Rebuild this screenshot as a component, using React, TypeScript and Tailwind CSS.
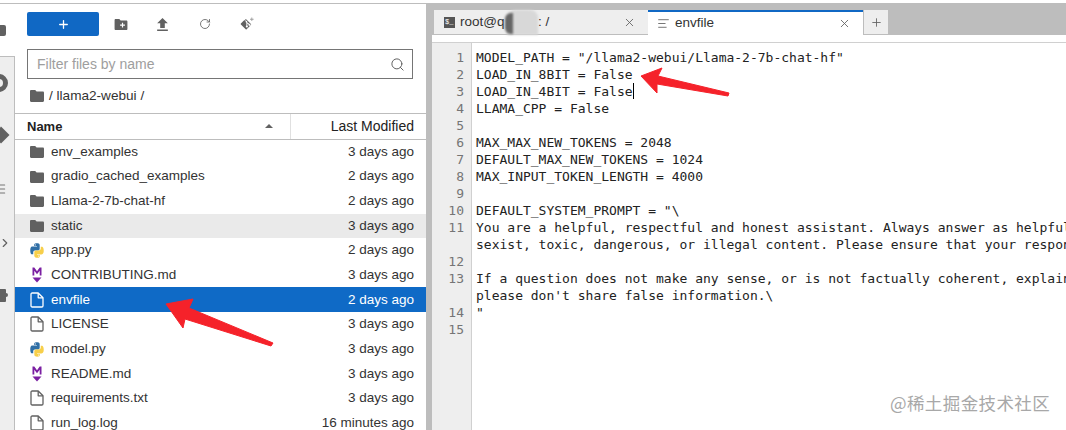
import { Plus, RotateCw, Search, X, ChevronRight, AlignLeft, Menu } from 'lucide-react';

const files = [
  { name: 'env_examples', time: '3 days ago', kind: 'folder' },
  { name: 'gradio_cached_examples', time: '2 days ago', kind: 'folder' },
  { name: 'Llama-2-7b-chat-hf', time: '2 days ago', kind: 'folder' },
  { name: 'static', time: '3 days ago', kind: 'folder', hover: true },
  { name: 'app.py', time: '2 days ago', kind: 'py' },
  { name: 'CONTRIBUTING.md', time: '3 days ago', kind: 'md' },
  { name: 'envfile', time: '2 days ago', kind: 'file', selected: true },
  { name: 'LICENSE', time: '3 days ago', kind: 'file' },
  { name: 'model.py', time: '3 days ago', kind: 'py' },
  { name: 'README.md', time: '3 days ago', kind: 'md' },
  { name: 'requirements.txt', time: '3 days ago', kind: 'file' },
  { name: 'run_log.log', time: '16 minutes ago', kind: 'file' },
];

const lines: [string, string][] = [
  ['1', 'MODEL_PATH = "/llama2-webui/Llama-2-7b-chat-hf"'],
  ['2', 'LOAD_IN_8BIT = False'],
  ['3', 'LOAD_IN_4BIT = False'],
  ['4', 'LLAMA_CPP = False'],
  ['5', ''],
  ['6', 'MAX_MAX_NEW_TOKENS = 2048'],
  ['7', 'DEFAULT_MAX_NEW_TOKENS = 1024'],
  ['8', 'MAX_INPUT_TOKEN_LENGTH = 4000'],
  ['9', ''],
  ['10', 'DEFAULT_SYSTEM_PROMPT = "\\'],
  ['11', 'You are a helpful, respectful and honest assistant. Always answer as helpful'],
  ['', 'sexist, toxic, dangerous, or illegal content. Please ensure that your respon'],
  ['12', ''],
  ['13', 'If a question does not make any sense, or is not factually coherent, explain'],
  ['', "please don't share false information.\\"],
  ['14', '"'],
  ['15', ''],
];

function FolderIcon({ className = 'w-[14px] h-[12px]' }: { className?: string }) {
  return (
    <svg viewBox="0 0 14 12" className={className} fill="#616161">
      <path d="M1.200 0h4l1.400 1.600h6.200c.7 0 1.200.5 1.200 1.200v8c0 .7-.5 1.200-1.200 1.200H1.200C.5 12 0 11.500 0 10.800V1.200C0 .5.5 0 1.200 0z" />
    </svg>
  );
}

function FileIcon({ color }: { color: string }) {
  return (
    <svg viewBox="0 0 14 16" className="w-[14px] h-[16px]" fill="none" stroke={color} strokeWidth="1.300" strokeLinejoin="round">
      <path d="M2.200 1h6l4.800 4.800v7.900c0 .7-.5 1.300-1.200 1.300H2.200c-.7 0-1.200-.6-1.200-1.300V2.300C1 1.600 1.500 1 2.200 1z" />
      <path d="M8.200 1v4.800H13" />
    </svg>
  );
}

function PyIcon() {
  return (
    <svg viewBox="0 0 16 16" className="w-[15px] h-[15px] scale-110">
      <path fill="#2f6ea5" d="M7.900.5C4.800.5 5 1.900 5 1.900v1.500h3v.5H3.200S1 3.600 1 7.900c0 4.200 1.900 4.100 1.900 4.100h1.200v-2s-.1-1.900 1.900-1.900h3s1.800 0 1.800-1.800V2.500S11.100.5 7.900.5zM6.200 1.600a.6.600 0 1 1 0 1.200.6.600 0 0 1 0-1.200z" />
      <path fill="#f7cf4a" d="M8.100 15.500c3.100 0 2.900-1.400 2.900-1.400v-1.500H8v-.5h4.800s2.200.3 2.200-4c0-4.200-1.900-4.100-1.900-4.100h-1.200v2s.1 1.900-1.900 1.900H7s-1.800 0-1.800 1.800v3.300s-.3 2.500 2.900 2.500zm1.700-1.100a.6.600 0 1 1 0-1.200.6.600 0 0 1 0 1.200z" />
    </svg>
  );
}

function MdIcon() {
  return (
    <svg viewBox="0 0 10 16" className="w-[10px] h-[16px]" fill="#7B1FA2">
      <path d="M0.500 0.500h1.800L5 4.200 7.700 0.500h1.800v8H7.700V3.800L5 7.200 2.300 3.800v4.700H.5z" />
      <path d="M0.500 10.500h9L5 15.500z" />
    </svg>
  );
}

function RowIcon({ kind, selected }: { kind: string; selected?: boolean }) {
  if (kind === 'folder') return <FolderIcon />;
  if (kind === 'py') return <PyIcon />;
  if (kind === 'md') return <MdIcon />;
  return <FileIcon color={selected ? '#ffffff' : '#616161'} />;
}

function GitIcon() {
  return (
    <svg viewBox="0 0 16 16" className="w-[14px] h-[14px]" fill="#616161">
      <path d="M7 2.500l5.500 5.500a.8.800 0 0 1 0 1.100L7.600 14a.8.800 0 0 1-1.100 0L1 8.500a.8.800 0 0 1 0-1.100L5 3.400l1.600 1.600a1.200 1.200 0 0 0 .7 1.600v3a1.200 1.200 0 1 0 1.100 0V7.300l1.300 1.300a1.200 1.200 0 1 0 .8-.8L8.200 5.900A1.200 1.200 0 0 0 6.700 4.500L5.600 2.900z" />
      <path d="M13 0.500h1v1.500h1.500v1H14v1.500h-1V3h-1.500V2H13z" fill="#9e9e9e" />
    </svg>
  );
}

function UploadIcon() {
  return (
    <svg viewBox="5 3 14 17" className="w-[11px] h-[13px]" fill="#616161">
      <path d="M9 16h6v-6h4l-7-7-7 7h4zm-4 2h14v2H5z" />
    </svg>
  );
}

function FolderPlusIcon() {
  return (
    <svg viewBox="0 0 14 12" className="w-[14px] h-[11px]">
      <path fill="#616161" d="M1.200 0h4l1.400 1.600h6.200c.7 0 1.200.5 1.200 1.200v8c0 .7-.5 1.200-1.200 1.200H1.200C.5 12 0 11.500 0 10.800V1.200C0 .5.5 0 1.200 0z" />
      <path fill="#fff" d="M8 4h1.300v2h2v1.300h-2v2H8v-2H6V6h2z" />
    </svg>
  );
}

function Sidebar() {
  return (
    <div className="w-[15px] shrink-0 flex flex-col overflow-hidden">
      <div className="h-[52px] shrink-0 relative">
        <div className="absolute left-[-8px] top-[21px] w-[14px] h-[11px] rounded-[2px] bg-[#616161]" />
      </div>
      <div className="flex-1 bg-[#eeeeee] border-t border-r border-[#bdbdbd] relative">
        <div className="absolute left-[-10px] top-[17px] w-[18px] h-[18px] rounded-full border-[5px] border-[#616161]" />
        <div className="absolute left-[-5px] top-[72px] w-[12px] h-[12px] rotate-45 bg-[#616161]" />
        <Menu size={14} strokeWidth={1.8} className="absolute left-[-7px] top-[125px] text-[#757575]" />
        <ChevronRight size={14} strokeWidth={2} className="absolute left-[-2px] top-[179px] text-[#616161]" />
        <div className="absolute left-[-5px] top-[232px] w-[11px] h-[13px] rounded-[1px] bg-[#616161]" />
        <div className="absolute left-[4px] top-[236px] w-[4px] h-[4px] rounded-full bg-[#616161]" />
      </div>
    </div>
  );
}

function FileBrowser() {
  return (
    <div className="w-[411px] shrink-0 flex flex-col bg-white overflow-hidden">
      <div className="shrink-0 flex items-center h-[24px] mt-[8px] pl-[12px] text-[#616161]">
        <button className="w-[72px] h-[24px] bg-[#1068c4] rounded-[2px] flex items-center justify-center text-white">
          <Plus size={13} strokeWidth={2.4} />
        </button>
        <div className="ml-[15px]"><FolderPlusIcon /></div>
        <div className="ml-[29px]"><UploadIcon /></div>
        <RotateCw size={12} strokeWidth={1.7} className="ml-[31px]" />
        <div className="ml-[29px]"><GitIcon /></div>
      </div>
      <div className="shrink-0 mt-[13px] ml-[12px] w-[386px] h-[30px] border border-[#757575] flex items-center justify-between pl-[9px] pr-[7px]">
        <span className="text-[14px] text-[#9e9e9e]">Filter files by name</span>
        <Search size={15} strokeWidth={1.6} className="text-[#616161]" />
      </div>
      <div className="shrink-0 h-[34px] pl-[15px] flex items-center gap-[5px] text-[13.600px] text-[#333]">
        <FolderIcon />
        <span>/ llama2-webui /</span>
      </div>
      <div className="shrink-0 h-[26.600px] flex items-center border-t border-b border-[#bdbdbd] text-[#222]">
        <div className="w-[275px] h-full pl-[12px] pr-[17px] flex items-center justify-between font-semibold text-[13px]">
          <span>Name</span>
          <span className="w-0 h-0 border-x-[4px] border-x-transparent border-b-[4px] border-b-[#616161]" />
        </div>
        <div className="flex-1 h-full border-l border-[#e0e0e0] pr-[12px] flex items-center justify-end text-[14px]">Last Modified</div>
      </div>
      <div className="flex flex-col">
        {files.map((f) => (
          <div
            key={f.name}
            className={
              'h-[24.650px] shrink-0 flex items-center pl-[15px] pr-[12px] text-[13.500px] ' +
              (f.selected ? 'bg-[#0f6ac6] text-white' : f.hover ? 'bg-[#eaeaea] text-[#333]' : 'text-[#333]')
            }
          >
            <div className="w-[14px] flex justify-center shrink-0"><RowIcon kind={f.kind} selected={f.selected} /></div>
            <span className="ml-[7px] flex-1 truncate">{f.name}</span>
            <span>{f.time}</span>
          </div>
        ))}
      </div>
    </div>
  );
}

function Editor() {
  return (
    <div className="flex-1 min-w-0 flex flex-col">
      <div className="h-[6px] shrink-0" />
      <div className="h-[25px] shrink-0 flex items-stretch text-[13.500px] text-[#333]">
        <div className="w-[214px] ml-[2px] bg-[#eeeeee] border-b border-[#bdbdbd] flex items-center pt-[1px] pl-[10px] pr-[12px] relative">
          <span className="w-[11px] h-[11px] bg-[#555] text-white text-[7px] leading-[11px] font-mono pl-[1px]">$_</span>
          <span className="ml-[5px]">root@q</span>
          <span className="absolute left-[73px] top-[0px] w-[31px] h-[25px] rounded-t-[8px] bg-[#d8d8d8] blur-[1px]" />
          <span className="absolute left-[71px] top-[3px] w-[8px] h-[21px] rounded-l-[6px] bg-[#666] blur-[1px]" />
          <span className="absolute left-[104px]">: /</span>
          <X size={13} strokeWidth={1.6} className="ml-auto text-[#616161]" />
        </div>
        <div className="w-[215px] bg-white border-t-2 border-[#1068c4] flex items-center pl-[9px] pr-[12px]">
          <AlignLeft size={13} strokeWidth={1.6} className="text-[#616161]" />
          <span className="ml-[5px]">envfile</span>
          <X size={13} strokeWidth={1.6} className="ml-auto text-[#616161]" />
        </div>
        <div className="w-[25px] bg-[#eeeeee] border-l border-b border-[#bdbdbd] flex items-center justify-center">
          <Plus size={13} strokeWidth={1.6} className="text-[#616161]" />
        </div>
        <div className="flex-1 border-b border-[#bdbdbd]" />
      </div>
      <div className="h-[7px] shrink-0 bg-white border-b border-[#d0d0d0] box-content" />
      <div className="flex-1 bg-white flex min-h-0 overflow-hidden font-['DejaVu_Sans_Mono',monospace] text-[13px] leading-[17px]">
        <div className="w-[40px] shrink-0 bg-[#eeeeee] border-r border-[#d0d0d0] pt-[6px] pr-[7px] text-right text-[#757575]">
          {lines.map((l, i) => (
            <div key={i} className="h-[17px]">{l[0]}</div>
          ))}
        </div>
        <div className="flex-1 min-w-0 pt-[6px] pl-[4px] text-[#222] overflow-hidden">
          {lines.map((l, i) => (
            <div key={i} className="h-[17px] whitespace-pre relative">
              {l[1]}
              {i === 2 && <span className="inline-block w-px h-[16px] bg-black align-top" />}
            </div>
          ))}
        </div>
      </div>
    </div>
  );
}

export default function App() {
  return (
    <div className="relative w-[1066px] h-[430px] overflow-hidden bg-white font-['Liberation_Sans',Arial,sans-serif]">
      <div className="h-[3px] bg-white" />
      <div className="h-[1px] bg-[#bdbdbd]" />
      <div className="flex h-[426px]">
        <Sidebar />
        <FileBrowser />
        <div className="flex-1 min-w-0 flex bg-[#bdbdbd] pl-[6px]">
          <Editor />
        </div>
      </div>

      {/* red annotation arrows */}
      <svg className="absolute left-0 top-0 w-[1066px] h-[430px] pointer-events-none" viewBox="0 0 1066 430">
        <path fill="#f5222a" stroke="#f5222a" strokeLinejoin="round" strokeWidth="1" d="M166 304 L193 299 L189 308 L273 343 L271 346 L185 319 L183 328 Z" />
        <path fill="#f5222a" stroke="#f5222a" strokeLinejoin="round" strokeWidth="1" d="M641 76 L662 68 L658 76 L729 93 L728 96 L657 84 L657 93 Z" />
      </svg>
      <div className="absolute left-[890px] top-[390px] text-[17.500px] tracking-[0.400px] text-[#a8a8a8] font-['Noto_Sans_CJK_SC',sans-serif]">
        @稀土掘金技术社区
      </div>
    </div>
  );
}
